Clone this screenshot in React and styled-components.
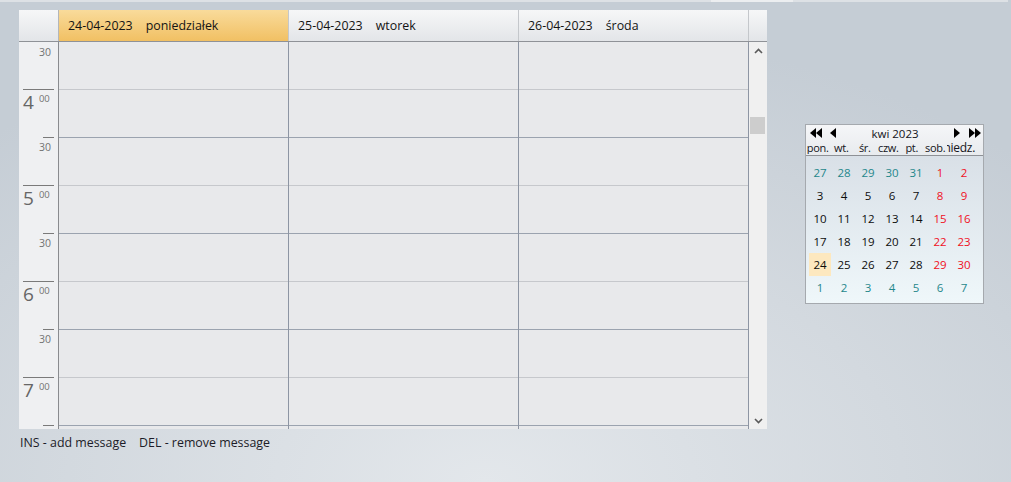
import React from 'react';
import styled, { createGlobalStyle } from 'styled-components';

const Global = createGlobalStyle`
  html, body { margin: 0; padding: 0; }
  body { font-family: "Open Sans", "Noto Sans", sans-serif; }
  * { box-sizing: border-box; }
`;

const Page = styled.div`
  width: 1011px;
  height: 482px;
  overflow: hidden;
  display: flex;
  flex-direction: column;
  background: radial-gradient(ellipse 75% 95% at 48% 100%, #e3e7eb 0%, #d3d9df 55%, #c5cdd5 100%);
`;

const TopStrip = styled.div`
  height: 2px;
  flex: none;
  background: linear-gradient(to right, #dde1e5 0 711px, #eceef0 711px 793px, #dde1e5 793px 1008px, transparent 1008px);
`;

const Content = styled.div`
  display: flex;
  align-items: flex-start;
  padding: 8px 0 0 19px;
`;

const LeftCol = styled.div`
  display: flex;
  flex-direction: column;
`;

const Scheduler = styled.div`
  width: 748px;
  display: flex;
  flex-direction: column;
`;

const HeaderRow = styled.div`
  display: flex;
  height: 32px;
  border-bottom: 1px solid #8f9297;
`;

const headerGrad = 'linear-gradient(#f6f7f8, #e3e5e8)';

const CornerCell = styled.div`
  width: 40px;
  background: ${headerGrad};
  border-right: 1px solid #b3b6ba;
`;

const DayHeader = styled.div`
  width: 230px;
  display: flex;
  align-items: center;
  gap: 13px;
  padding-left: 9px;
  font-size: 12.4px;
  color: #141414;
  border-right: 1px solid #c4c7cb;
  background: ${p => (p.$selected ? 'linear-gradient(#f9db9b, #f1c063)' : headerGrad)};
`;

const ScrollHeader = styled.div`
  width: 18px;
  background: ${headerGrad};
`;

const Body = styled.div`
  display: flex;
  height: 387px;
  overflow: hidden;
`;

const TimeCol = styled.div`
  width: 40px;
  background: #eff0f2;
  border-right: 1px solid #898b8f;
  display: flex;
  flex-direction: column;
`;

const TimeSlot = styled.div`
  flex: none;
  height: ${p => (p.$first ? 47 : 48)}px;
  display: flex;
  justify-content: flex-end;
  align-items: flex-start;
  padding-right: 4px;
`;

const Mark = styled.div`
  width: ${p => (p.$hour ? 31 : 11)}px;
  border-top: 1px solid ${p => (p.$noLine ? 'transparent' : '#7a7a7a')};
  display: flex;
  justify-content: ${p => (p.$hour ? 'flex-start' : 'flex-end')};
  color: #6e6e6e;
  line-height: 1;
`;

const HourNum = styled.span`
  font-size: 19px;
  margin-top: 3px;
  color: #666;
`;

const HourSup = styled.span`
  font-size: 9.5px;
  margin: 4px 0 0 5px;
  color: #737373;
`;

const HalfText = styled.span`
  font-size: 10.5px;
  margin-top: 4px;
  padding-right: 3px;
  color: #737373;
`;

const DayCol = styled.div`
  width: 230px;
  background: #e8e9eb;
  border-right: 1px solid #8d95a3;
  display: flex;
  flex-direction: column;
`;

const Slot = styled.div`
  flex: none;
  height: 48px;
  border-bottom: 1px solid ${p => (p.$dark ? '#9ba3af' : '#c6c8cc')};
`;

const Scrollbar = styled.div`
  width: 18px;
  background: #f0f0f0;
  display: flex;
  flex-direction: column;
`;

const ArrowBtn = styled.div`
  height: 17px;
  flex: none;
  display: flex;
  justify-content: center;
  align-items: ${p => (p.$down ? 'flex-end' : 'flex-start')};
  padding: ${p => (p.$down ? '0 0 5px 0' : '6px 0 0 0')};
`;

const Track = styled.div`
  flex: 1;
  display: flex;
  flex-direction: column;
`;

const Thumb = styled.div`
  width: 15px;
  height: 17px;
  margin: 58px 0 0 1px;
  background: #cdcdcd;
`;

const Footer = styled.div`
  display: flex;
  gap: 13px;
  margin-top: 5px;
  padding-left: 1px;
  font-size: 12.4px;
  color: #1c1c28;
`;

const MiniCal = styled.div`
  width: 179px;
  height: 180px;
  margin: 114px 0 0 38px;
  border: 1px solid #a5a9ae;
  display: flex;
  flex-direction: column;
`;

const CalHeader = styled.div`
  height: 31px;
  flex: none;
  background: linear-gradient(#f5f6f8, #e8ebee);
  border-bottom: 1px solid #8e9196;
  display: flex;
  flex-direction: column;
`;

const NavRow = styled.div`
  height: 15px;
  display: flex;
  align-items: center;
  padding: 1px 2px 0 4px;
`;

const NavGroup = styled.div`
  display: flex;
  align-items: center;
  gap: ${p => p.$gap}px;
`;

const Title = styled.div`
  flex: 1;
  text-align: center;
  color: #141420;
  font-size: 11.5px;
  line-height: 13px;
`;

const NamesRow = styled.div`
  height: 15px;
  display: grid;
  grid-template-columns: repeat(6, 23.5px) 1fr;
  align-items: center;
`;

const NameCell = styled.div`
  display: flex;
  justify-content: ${p => (p.$clipped ? 'flex-end' : 'center')};
  padding-right: ${p => (p.$clipped ? 8 : 0)}px;
  overflow: hidden;
  white-space: nowrap;
  color: #141420;
  font-size: ${p => (p.$clipped ? 12 : 11)}px;
  letter-spacing: -0.3px;
  line-height: 13px;
  & > span { flex: none; }
`;

const CalBody = styled.div`
  flex: 1;
  padding: 5px 0 0 2px;
  background: linear-gradient(#d9e0e7, #eff7fa);
  display: grid;
  grid-template-columns: repeat(7, 24px);
  grid-auto-rows: 23px;
  align-content: start;
`;

const colors = { other: '#1f878b', cur: '#0c0c0c', wknd: '#f0101e' };

const DayNum = styled.div`
  margin: 0 1px;
  display: flex;
  align-items: center;
  justify-content: center;
  font-size: 11.5px;
  color: ${p => colors[p.$type]};
  background: ${p => (p.$today ? '#fde8bf' : 'transparent')};
`;

const Chevron = ({ down }) => (
  <svg width="9" height="6" viewBox="0 0 9 6">
    <polyline
      points={down ? '1,1 4.5,4.5 8,1' : '1,5 4.5,1.5 8,5'}
      fill="none"
      stroke="#5a5a5a"
      strokeWidth="1.6"
    />
  </svg>
);

const Tri = ({ dir, double }) => {
  const w = double ? 12 : 6;
  const one = x =>
    dir === 'left' ? `${x},5 ${x + 6},0 ${x + 6},10` : `${x},0 ${x + 6},5 ${x},10`;
  return (
    <svg width={w} height="10" viewBox={`0 0 ${w} 10`}>
      <polygon points={one(0)} fill="#000" />
      {double && <polygon points={one(6)} fill="#000" />}
    </svg>
  );
};

const slots = [
  { half: true, label: '30' },
  { hour: '4' },
  { half: true, label: '30' },
  { hour: '5' },
  { half: true, label: '30' },
  { hour: '6' },
  { half: true, label: '30' },
  { hour: '7' },
  { half: true, label: '' },
];

const days = [
  { date: '24-04-2023', name: 'poniedziałek', selected: true },
  { date: '25-04-2023', name: 'wtorek' },
  { date: '26-04-2023', name: 'środa' },
];

const names = ['pon.', 'wt.', 'śr.', 'czw.', 'pt.', 'sob.', 'niedz.'];

const weeks = [
  [[27, 'other'], [28, 'other'], [29, 'other'], [30, 'other'], [31, 'other'], [1, 'wknd'], [2, 'wknd']],
  [[3, 'cur'], [4, 'cur'], [5, 'cur'], [6, 'cur'], [7, 'cur'], [8, 'wknd'], [9, 'wknd']],
  [[10, 'cur'], [11, 'cur'], [12, 'cur'], [13, 'cur'], [14, 'cur'], [15, 'wknd'], [16, 'wknd']],
  [[17, 'cur'], [18, 'cur'], [19, 'cur'], [20, 'cur'], [21, 'cur'], [22, 'wknd'], [23, 'wknd']],
  [[24, 'cur'], [25, 'cur'], [26, 'cur'], [27, 'cur'], [28, 'cur'], [29, 'wknd'], [30, 'wknd']],
  [[1, 'other'], [2, 'other'], [3, 'other'], [4, 'other'], [5, 'other'], [6, 'other'], [7, 'other']],
];

export default function App() {
  return (
    <>
      <Global />
      <Page>
        <TopStrip />
        <Content>
          <LeftCol>
            <Scheduler>
              <HeaderRow>
                <CornerCell />
                {days.map(d => (
                  <DayHeader key={d.date} $selected={d.selected}>
                    <span>{d.date}</span>
                    <span>{d.name}</span>
                  </DayHeader>
                ))}
                <ScrollHeader />
              </HeaderRow>
              <Body>
                <TimeCol>
                  {slots.map((s, i) => (
                    <TimeSlot key={i} $first={i === 0}>
                      {s.hour ? (
                        <Mark $hour>
                          <HourNum>{s.hour}</HourNum>
                          <HourSup>00</HourSup>
                        </Mark>
                      ) : (
                        <Mark $noLine={i === 0}>
                          <HalfText>{s.label}</HalfText>
                        </Mark>
                      )}
                    </TimeSlot>
                  ))}
                </TimeCol>
                {days.map(d => (
                  <DayCol key={d.date}>
                    {slots.map((s, i) => (
                      <Slot key={i} $dark={i % 2 === 1} />
                    ))}
                  </DayCol>
                ))}
                <Scrollbar>
                  <ArrowBtn>
                    <Chevron />
                  </ArrowBtn>
                  <Track>
                    <Thumb />
                  </Track>
                  <ArrowBtn $down>
                    <Chevron down />
                  </ArrowBtn>
                </Scrollbar>
              </Body>
            </Scheduler>
            <Footer>
              <span>INS - add message</span>
              <span>DEL - remove message</span>
            </Footer>
          </LeftCol>
          <MiniCal>
            <CalHeader>
              <NavRow>
                <NavGroup $gap={8}>
                  <Tri dir="left" double />
                  <Tri dir="left" />
                </NavGroup>
                <Title>kwi 2023</Title>
                <NavGroup $gap={9}>
                  <Tri dir="right" />
                  <Tri dir="right" double />
                </NavGroup>
              </NavRow>
              <NamesRow>
                {names.map((n, i) => (
                  <NameCell key={n} $clipped={i === 6}>
                    <span>{n}</span>
                  </NameCell>
                ))}
              </NamesRow>
            </CalHeader>
            <CalBody>
              {weeks.flat().map(([n, t], i) => (
                <DayNum key={i} $type={t} $today={i === 28}>
                  {n}
                </DayNum>
              ))}
            </CalBody>
          </MiniCal>
        </Content>
      </Page>
    </>
  );
}
